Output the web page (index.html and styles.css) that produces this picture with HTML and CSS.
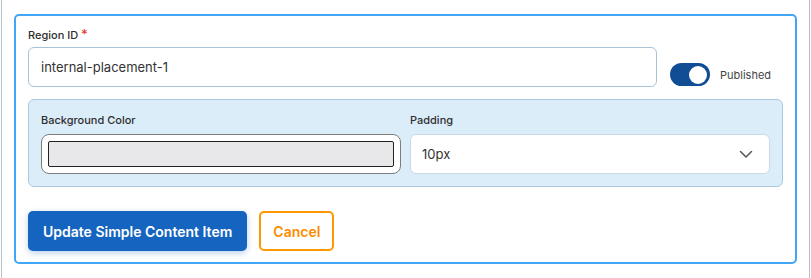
FILE: index.html
```html
<!DOCTYPE html>
<html>
<head>
<meta charset="utf-8">
<link rel="stylesheet" href="styles.css">
</head>
<body>
<div class="wrap">
  <form class="card">
    <div class="top-row">
      <div class="field-main">
        <label class="label">Region ID <span class="req">*</span></label>
        <div class="input">internal-placement-1</div>
      </div>
      <div class="toggle-group">
        <span class="toggle"><span class="knob"></span></span>
        <span class="toggle-label">Published</span>
      </div>
    </div>
    <div class="panel">
      <div class="col">
        <label class="label">Background Color</label>
        <div class="color-input"><span class="swatch"></span></div>
      </div>
      <div class="col">
        <label class="label">Padding</label>
        <div class="select">
          <span>10px</span>
          <svg class="chev" width="14" height="14" viewBox="0 0 14 14"><path d="M1.5 4.5 L7 10 L12.5 4.5" fill="none" stroke="#555" stroke-width="1.5" stroke-linecap="round" stroke-linejoin="round"/></svg>
        </div>
      </div>
    </div>
    <div class="actions">
      <button type="button" class="btn-primary">Update Simple Content Item</button>
      <button type="button" class="btn-cancel">Cancel</button>
    </div>
  </form>
</div>
</body>
</html>
```
FILE: styles.css
```css
* { box-sizing: border-box; }
html, body { margin: 0; padding: 0; background: #fff; }
body { font-family: Inter, "Noto Sans", sans-serif; color: #333; }
.wrap {
  margin: 0 1px;
  height: 278px;
  border-left: 1px solid #b4c2cc;
  border-right: 1px solid #b4c2cc;
  padding: 14px 12px 0 12px;
}
.card {
  border: 2px solid #42a5f5;
  border-radius: 5px;
  padding: 10px 12px 12px 12px;
  height: 250px;
}
.top-row { display: flex; align-items: flex-end; gap: 13px; }
.field-main { flex: 1; }
.label {
  display: block;
  font-size: 11px;
  line-height: 16px;
  font-weight: 500;
  color: #2e2e2e;
}
.req { color: #e53935; font-size: 13px; }
.input {
  margin-top: 4px;
  height: 40px;
  border: 1px solid #a9c2d8;
  border-radius: 6px;
  padding: 0 12px;
  display: flex;
  align-items: center;
  font-size: 13px;
  color: #333;
}
.toggle-group {
  width: 113px;
  display: flex;
  align-items: center;
  gap: 10px;
  margin-bottom: 1px;
}
.toggle {
  width: 40px;
  height: 23px;
  border-radius: 12px;
  background: #114d94;
  display: flex;
  align-items: center;
  justify-content: flex-end;
  padding-right: 3px;
}
.knob {
  width: 18px; height: 18px;
  border-radius: 50%;
  background: #fff;
}
.toggle-label { font-size: 11px; color: #444; }
.panel {
  margin-top: 12px;
  background: #dcedfa;
  border: 1px solid #a9c9e2;
  border-radius: 6px;
  padding: 12px 12px 12px 12px;
  display: grid;
  grid-template-columns: 1fr 1fr;
  gap: 9px;
}
.col .label { margin-bottom: 6px; }
.color-input {
  height: 40px;
  background: #fff;
  border: 1px solid #7d7d7d;
  border-radius: 8px;
  padding: 6px;
  display: flex;
}
.swatch {
  flex: 1;
  background: #e8e8ea;
  border: 1px solid #222;
  border-radius: 2px;
}
.select {
  height: 40px;
  background: #fff;
  border: 1px solid #c9d9e8;
  border-radius: 6px;
  padding: 0 16px 0 11px;
  display: flex;
  align-items: center;
  justify-content: space-between;
  font-size: 13px;
  color: #333;
}
.actions { margin-top: 24px; display: flex; gap: 12px; }
.btn-primary {
  height: 40px;
  padding: 0 15px;
  background: #1565c0;
  color: #fff;
  border: none;
  border-radius: 5px;
  font-family: Inter, "Noto Sans", sans-serif;
  font-size: 14px;
  font-weight: 600;
  box-shadow: 0 2px 6px rgba(21, 101, 192, 0.3);
}
.btn-cancel {
  height: 40px;
  padding: 0 12px;
  background: #fff;
  color: #fb8c00;
  border: 2px solid #ff9800;
  border-radius: 5px;
  font-family: Inter, "Noto Sans", sans-serif;
  font-size: 14px;
  font-weight: 600;
}
```
